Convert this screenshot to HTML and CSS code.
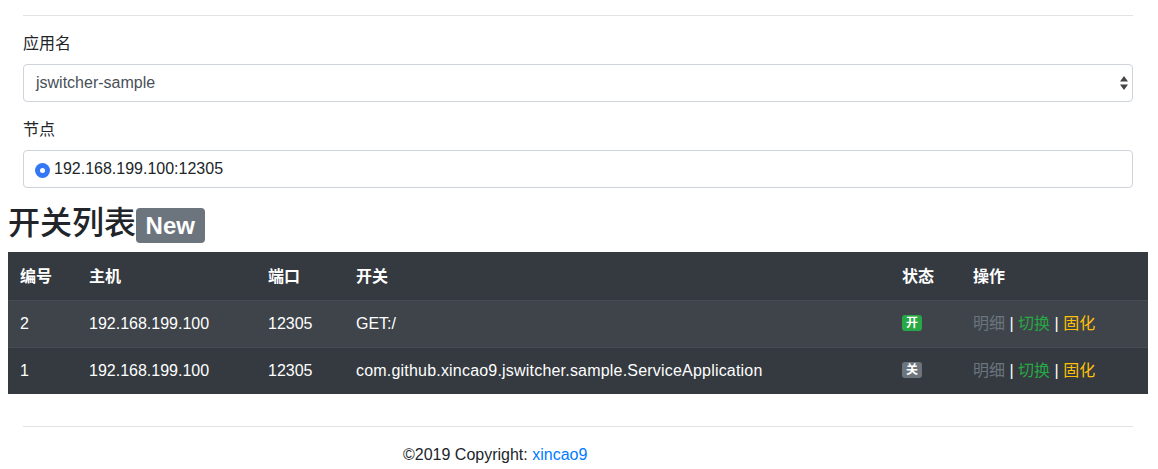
FILE: index.html
```html
<!DOCTYPE html>
<html lang="zh-CN">
<head>
<meta charset="utf-8">
<title>jswitcher</title>
<link rel="stylesheet" href="styles.css">
</head>
<body>
<div class="page">
  <div class="form-area">
    <hr class="rule">
    <div class="form-group">
      <label class="label">应用名</label>
      <div class="select">
        <span>jswitcher-sample</span>
        <svg class="arrows" width="8" height="14" viewBox="0 0 8 14"><path d="M4 0 L8 5.5 L0 5.5 Z" fill="#444"/><path d="M0 8.5 L8 8.5 L4 14 Z" fill="#444"/></svg>
      </div>
    </div>
    <div class="form-group">
      <label class="label">节点</label>
      <div class="input">
        <span class="radio"></span><span class="node">192.168.199.100:12305</span>
      </div>
    </div>
  </div>
  <h2 class="title">开关列表<span class="badge-new">New</span></h2>
  <table class="table">
    <thead>
      <tr>
        <th class="c-id">编号</th>
        <th class="c-host">主机</th>
        <th class="c-port">端口</th>
        <th class="c-switch">开关</th>
        <th class="c-state">状态</th>
        <th class="c-op">操作</th>
      </tr>
    </thead>
    <tbody>
      <tr class="odd">
        <td>2</td>
        <td>192.168.199.100</td>
        <td>12305</td>
        <td>GET:/</td>
        <td><span class="badge on">开</span></td>
        <td><span class="muted">明细</span> | <span class="green">切换</span> | <span class="yellow">固化</span></td>
      </tr>
      <tr>
        <td>1</td>
        <td>192.168.199.100</td>
        <td>12305</td>
        <td class="long">com.github.xincao9.jswitcher.sample.ServiceApplication</td>
        <td><span class="badge off">关</span></td>
        <td><span class="muted">明细</span> | <span class="green">切换</span> | <span class="yellow">固化</span></td>
      </tr>
    </tbody>
  </table>
  <footer class="footer">
    <hr class="rule">
    <p class="copy">©2019 Copyright: <a href="#" class="link">xincao9</a></p>
  </footer>
</div>
</body>
</html>
```
FILE: styles.css
```css
* { box-sizing: border-box; }
html, body { margin: 0; padding: 0; background: #fff; }
body {
  font-family: "Liberation Sans", "Noto Sans CJK SC", sans-serif;
  font-size: 16px;
  line-height: 24px;
  color: #212529;
}
.page {
  width: 1140px;
  margin-left: 8px;
}
.form-area {
  padding: 15px 15px 0;
}
.rule {
  margin: 0 0 16px;
  border: 0;
  border-top: 1px solid #e2e3e5;
  height: 0;
}
.form-group { margin-bottom: 16px; }
.label {
  display: block;
  margin-bottom: 8px;
  height: 24px;
}
.select, .input {
  height: 38px;
  border: 1px solid #ced4da;
  border-radius: 4px;
  display: flex;
  align-items: center;
}
.select {
  padding: 0 12px 0 12px;
  color: #495057;
  justify-content: space-between;
}
.arrows { margin-right: -8px; }
.input {
  padding: 0 11px;
}
.radio {
  width: 15px;
  height: 15px;
  border-radius: 50%;
  background: #3478f6;
  display: flex;
  align-items: center;
  justify-content: center;
  margin-right: 4px;
  margin-top: 2px;
}
.radio::after {
  content: "";
  width: 5px;
  height: 5px;
  border-radius: 50%;
  background: #fff;
}
.node { color: #212529; }
.title {
  margin: 0 0 10px;
  font-size: 32px;
  font-weight: 500;
  line-height: 38px;
  height: 38px;
  display: flex;
  align-items: center;
}
.badge-new {
  display: inline-block;
  font-size: 24px;
  font-weight: 700;
  line-height: 1;
  padding: 6px 9.6px 5px;
  margin-left: 0;
  margin-top: 4px;
  background: #6c757d;
  color: #fff;
  border-radius: 4px;
}
.table {
  width: 1140px;
  border-collapse: collapse;
  background: #343a40;
  color: #fff;
  table-layout: fixed;
}
.table th {
  text-align: left;
  font-weight: 700;
  padding: 13px 12px 11px;
  height: 48px;
  border-bottom: 0;
}
.table td {
  padding: 11px 12px;
  border-top: 1px solid #454d55;
  height: 47px;
  white-space: nowrap;
}
.table tbody tr:last-child td { height: 46px; padding-top: 11px; padding-bottom: 10px; }
.table tr.odd td { background: #3e444a; }
.table td.long { letter-spacing: 0.2px; }
.c-id { width: 69px; }
.c-host { width: 179px; }
.c-port { width: 88px; }
.c-switch { width: 546px; }
.c-state { width: 71px; }
.c-op { width: 187px; }
.badge {
  display: inline-block;
  font-size: 12px;
  font-weight: 700;
  line-height: 1;
  padding: 2px 4px;
  border-radius: 3px;
  vertical-align: 2px;
  color: #fff;
}
.badge.on { background: #28a745; }
.badge.off { background: #6c757d; }
.muted { color: #6c757d; }
.green { color: #28a745; }
.yellow { color: #ffc107; }
.footer {
  padding: 32px 15px 0;
}
.copy {
  margin: 0;
  padding-left: 380px;
  line-height: 24px;
}
.link { color: #007bff; text-decoration: none; }
```
